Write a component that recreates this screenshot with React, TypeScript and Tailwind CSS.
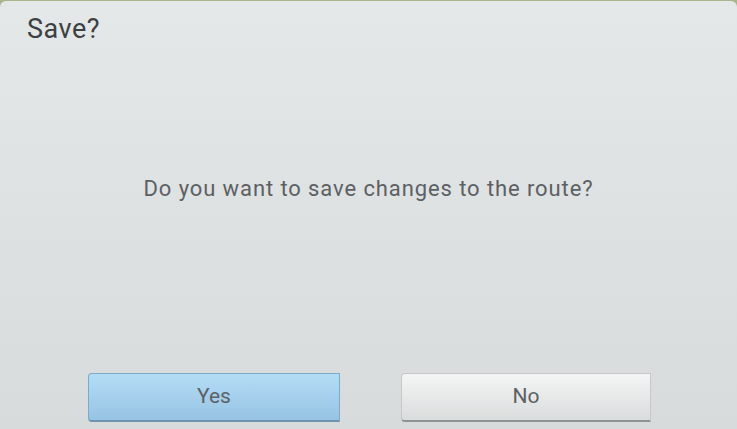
import React from "react";

export default function App() {
  return (
    <div className="w-[737px] h-[429px] bg-[#a9b58c] overflow-hidden" style={{ fontFamily: "Roboto, 'Noto Sans', sans-serif" }}>
      <div className="w-full h-full flex flex-col mt-px rounded-t-[6px] bg-gradient-to-b from-[#e5e8e9] to-[#d7dbdb] text-[#5c6063]">
        <div className="pl-[27px] pt-[10px] text-[27px] leading-[36px] tracking-[0.5px] text-[#3c4043]">Save?</div>
        <div className="flex-1 flex items-center justify-center pb-[44px]">
          <span className="text-[22px] tracking-[0.9px]">Do you want to save changes to the route?</span>
        </div>
        <div className="flex gap-[61px] pl-[88px] pb-[8px]">
          <button className="w-[252px] h-[49px] rounded-l-[4px] border border-[#7fa9c8] border-b-[2px] border-b-[#6f93ae] bg-gradient-to-b from-[#b3dcf6] to-[#97c3e3] text-[21px] text-[#5b6266]">
            Yes
          </button>
          <button className="w-[250px] h-[49px] rounded-l-[4px] border border-[#c4c8c8] border-b-[2px] border-b-[#8f9393] bg-gradient-to-b from-[#f4f5f5] to-[#dadddd] text-[21px] text-[#5b6266]">
            No
          </button>
        </div>
      </div>
    </div>
  );
}
